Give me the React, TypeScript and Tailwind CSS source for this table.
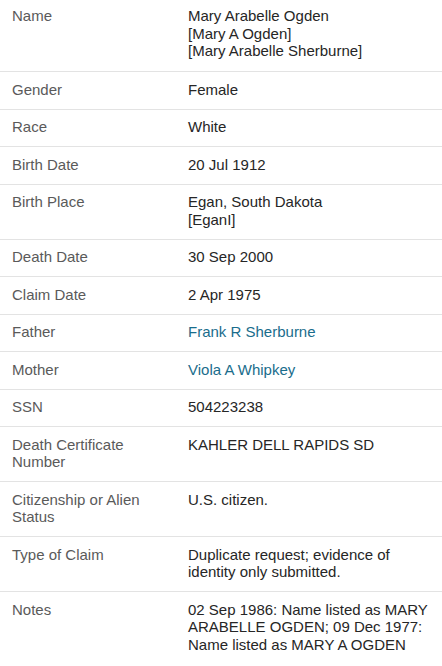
import React from "react";

type Row = { label: string; value: React.ReactNode; link?: boolean };

const rows: Row[] = [
  {
    label: "Name",
    value: (
      <>
        Mary Arabelle Ogden
        <br />
        [Mary A Ogden]
        <br />
        [Mary Arabelle Sherburne]
      </>
    ),
  },
  { label: "Gender", value: "Female" },
  { label: "Race", value: "White" },
  { label: "Birth Date", value: "20 Jul 1912" },
  {
    label: "Birth Place",
    value: (
      <>
        Egan, South Dakota
        <br />
        [EganI]
      </>
    ),
  },
  { label: "Death Date", value: "30 Sep 2000" },
  { label: "Claim Date", value: "2 Apr 1975" },
  { label: "Father", value: "Frank R Sherburne", link: true },
  { label: "Mother", value: "Viola A Whipkey", link: true },
  { label: "SSN", value: "504223238" },
  { label: "Death Certificate Number", value: "KAHLER DELL RAPIDS SD" },
  { label: "Citizenship or Alien Status", value: "U.S. citizen." },
  {
    label: "Type of Claim",
    value: "Duplicate request; evidence of identity only submitted.",
  },
  {
    label: "Notes",
    value:
      "02 Sep 1986: Name listed as MARY ARABELLE OGDEN; 09 Dec 1977: Name listed as MARY A OGDEN",
  },
];

export default function App() {
  return (
    <div
      className="w-[442px] h-[666px] overflow-hidden bg-white text-[15px] leading-[17.5px]"
      style={{ fontFamily: '"Liberation Sans", Arial, Helvetica, sans-serif' }}
    >
      {rows.map((r, i) => (
        <div
          key={r.label}
          className={
            "flex border-[#e3e3e3] " +
            (i === rows.length - 1 ? "" : "border-b ") +
            (i === 0 ? "pt-[7px] pb-[11.5px]" : "pt-[8.5px] pb-[10.5px]")
          }
        >
          <div className="w-[188px] shrink-0 pl-3 pr-4 text-[#5a5a5a]">
            {r.label}
          </div>
          <div
            className={
              "flex-1 pr-2 " + (r.link ? "text-[#1a6d8c]" : "text-[#262626]")
            }
          >
            {r.value}
          </div>
        </div>
      ))}
    </div>
  );
}
